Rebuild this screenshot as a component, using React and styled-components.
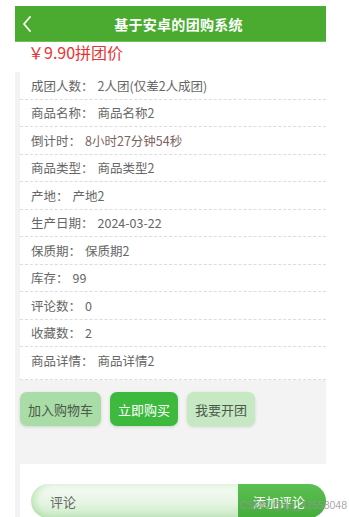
import React from 'react';
import styled, { createGlobalStyle } from 'styled-components';

const GlobalStyle = createGlobalStyle`
  html, body {
    margin: 0;
    padding: 0;
    background: #ffffff;
    font-family: "Noto Sans CJK SC", "Liberation Sans", sans-serif;
  }
`;

const Page = styled.div`
  position: relative;
  width: 349px;
  height: 517px;
  overflow: hidden;
`;

const Screen = styled.div`
  width: 311px;
  height: 511px;
  margin: 6px 0 0 15px;
  background: #f3f3f3;
  overflow: hidden;
`;

const Header = styled.div`
  display: flex;
  align-items: center;
  height: 36px;
  background: #4aab30;
  border-bottom: 1px solid #6cc455;
  box-sizing: border-box;
`;

const BackButton = styled.div`
  display: flex;
  align-items: center;
  justify-content: center;
  width: 24px;
  height: 36px;
`;

const Title = styled.div`
  flex: 1;
  text-align: center;
  padding-right: 8px;
  color: #ffffff;
  font-size: 14px;
  font-weight: 700;
  letter-spacing: 0.3px;
`;

const InfoCard = styled.div`
  margin-left: 5px;
  background: #ffffff;
`;

const Price = styled.div`
  height: 30px;
  padding-left: 13px;
  margin-left: -5px;
  background: #ffffff;
  color: #e63434;
  font-size: 16px;
  line-height: 20px;
`;

const Row = styled.div`
  display: flex;
  align-items: center;
  height: ${p => (p.last ? '33px' : '27.5px')};
  padding-left: 11px;
  padding-bottom: ${p => (p.last ? '5px' : '0')};
  border-bottom: 1px dashed #dcdcdc;
  box-sizing: border-box;
  font-size: 12.5px;
  color: #666666;
`;

const Label = styled.span`
  margin-right: 4px;
`;

const Value = styled.span`
  color: ${p => (p.accent ? '#7d6262' : '#666666')};
`;

const ActionBar = styled.div`
  display: flex;
  gap: 9px;
  padding: 12px 0 0 5px;
  height: 84px;
  box-sizing: border-box;
`;

const ActionButton = styled.div`
  display: flex;
  align-items: center;
  justify-content: center;
  height: 34px;
  padding: 0 8px;
  border-radius: 7px;
  font-size: 13px;
  color: ${p => (p.primary ? '#ffffff' : '#4a5a4a')};
  background: ${p => (p.primary ? '#3dba3d' : p.pale ? '#c6e9c4' : '#a9dca6')};
  box-shadow: 0 1px 3px rgba(60, 140, 60, 0.25);
`;

const CommentCard = styled.div`
  margin-left: 5px;
  height: 50px;
  background: #ffffff;
  padding: 20px 0 0 11px;
`;

const CommentBar = styled.div`
  display: flex;
  height: 34px;
`;

const CommentInput = styled.div`
  display: flex;
  align-items: center;
  width: 207px;
  padding-left: 19px;
  box-sizing: border-box;
  border-radius: 17px 0 0 17px;
  background: linear-gradient(180deg, #f6fbf5 0%, #e6f5e3 55%, #c9eac4 100%);
  box-shadow: inset 4px 0 6px rgba(120, 200, 110, 0.35);
  font-size: 13px;
  color: #666666;
`;

const CommentButton = styled.div`
  display: flex;
  align-items: center;
  justify-content: center;
  flex: 1;
  border-radius: 0 17px 17px 0;
  background: linear-gradient(180deg, #5cbf52 0%, #43ad3a 100%);
  color: #ffffff;
  font-size: 13px;
  padding-right: 6px;
`;

const Watermark = styled.div`
  position: absolute;
  right: 2px;
  bottom: 6px;
  font-family: "Liberation Sans", sans-serif;
  font-size: 10.5px;
  color: rgba(150, 150, 150, 0.85);
  white-space: nowrap;
  pointer-events: none;
`;

const rows = [
  ['成团人数：', '2人团(仅差2人成团)'],
  ['商品名称：', '商品名称2'],
  ['倒计时：', '8小时27分钟54秒', true],
  ['商品类型：', '商品类型2'],
  ['产地：', '产地2'],
  ['生产日期：', '2024-03-22'],
  ['保质期：', '保质期2'],
  ['库存：', '99'],
  ['评论数：', '0'],
  ['收藏数：', '2'],
  ['商品详情：', '商品详情2'],
];

export default function App() {
  return (
    <>
      <GlobalStyle />
      <Page>
        <Screen>
          <Header>
            <BackButton>
              <svg width="10" height="16" viewBox="0 0 10 16">
                <path d="M8 1 L2 8 L8 15" fill="none" stroke="#ffffff" strokeWidth="1.8" strokeLinecap="round" strokeLinejoin="round" />
              </svg>
            </BackButton>
            <Title>基于安卓的团购系统</Title>
          </Header>
          <InfoCard>
            <Price>￥9.90拼团价</Price>
            {rows.map(([label, value, accent], i) => (
              <Row key={label} last={i === rows.length - 1}>
                <Label>{label}</Label>
                <Value accent={accent}>{value}</Value>
              </Row>
            ))}
          </InfoCard>
          <ActionBar>
            <ActionButton>加入购物车</ActionButton>
            <ActionButton primary>立即购买</ActionButton>
            <ActionButton pale>我要开团</ActionButton>
          </ActionBar>
          <CommentCard>
            <CommentBar>
              <CommentInput>评论</CommentInput>
              <CommentButton>添加评论</CommentButton>
            </CommentBar>
          </CommentCard>
        </Screen>
        <Watermark>CSDN @qq_42558048</Watermark>
      </Page>
    </>
  );
}
